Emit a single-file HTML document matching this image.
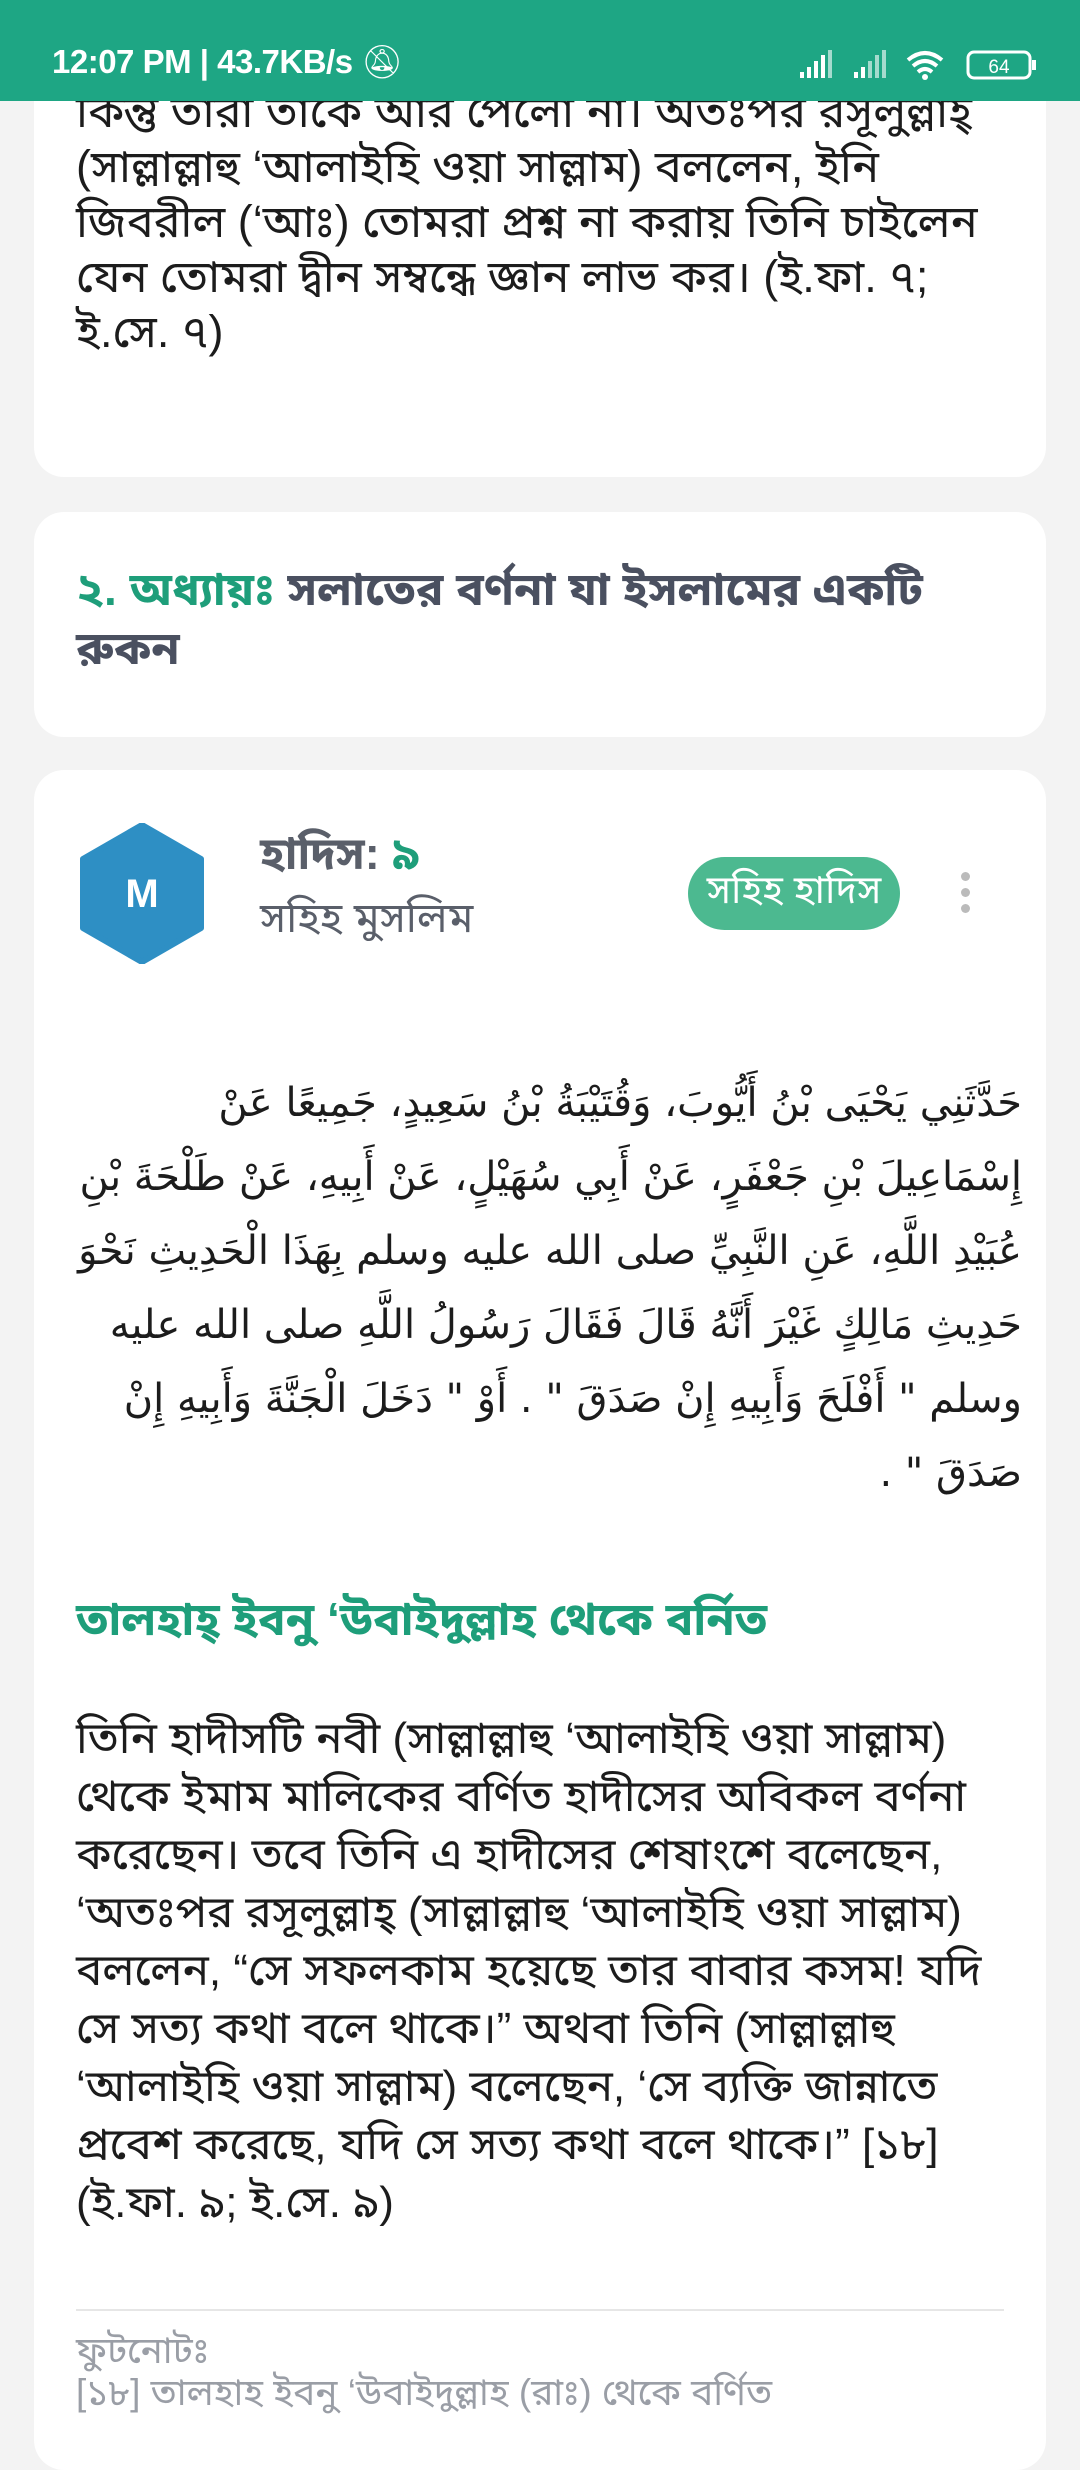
<!DOCTYPE html>
<html><head><meta charset="utf-8"><style>
*{margin:0;padding:0;box-sizing:border-box}
body{width:1080px;height:2400px;overflow:hidden;background:#f3f3f3;font-family:"Liberation Sans","Noto Sans Bengali","Lohit Bengali","Noto Sans CJK SC",sans-serif;position:relative}
.sb{position:absolute;top:0;left:0;width:1080px;height:101px;background:#1ea684;z-index:5;color:#fff}
.card{position:absolute;left:34px;width:1012px;background:#fff;border-radius:30px;overflow:hidden}
.txt{font-size:45px;line-height:55px;color:#1c1c1c;white-space:nowrap}
</style></head><body>
<div class="sb">
<div style="position:absolute;left:52px;top:43px;font-size:33px;font-weight:bold;letter-spacing:-0.5px">12:07 PM | 43.7KB/s <span style="font-weight:normal">🔕︎</span></div>
<svg style="position:absolute;left:798px;top:48px" width="240" height="34" viewBox="0 0 240 34">
<g fill="#fff"><rect x="2" y="24" width="4" height="6"/><rect x="9" y="19" width="4" height="11"/><rect x="16" y="13" width="4" height="17"/><rect x="23" y="7" width="4" height="23"/><rect x="30" y="2" width="4" height="28" opacity=".6"/>
<rect x="56" y="24" width="4" height="6"/><rect x="63" y="19" width="4" height="11"/><rect x="70" y="13" width="4" height="17" opacity=".6"/><rect x="77" y="7" width="4" height="23" opacity=".6"/><rect x="84" y="2" width="4" height="28" opacity=".6"/></g>
<path d="M110 12 Q127 -2 144 12 M115 18 Q127 8 139 18 M120 24 Q127 18 134 24" stroke="#fff" stroke-width="4" fill="none"/><circle cx="127" cy="29" r="3" fill="#fff"/>
<rect x="170" y="4" width="62" height="26" rx="6" stroke="#fff" stroke-width="3" fill="none"/><rect x="234" y="12" width="4" height="10" fill="#fff"/>
<text x="201" y="25" font-size="19" fill="#fff" text-anchor="middle" font-family="Liberation Sans">64</text></svg>
</div>
<div class="card txt" style="top:60px;height:417px;padding:24px 42px 0 42px">
কিন্তু তারা তাকে আর পেলো না। অতঃপর রসূলুল্লাহ্<br>(সাল্লাল্লাহু ‘আলাইহি ওয়া সাল্লাম) বললেন, ইনি<br>জিবরীল (‘আঃ) তোমরা প্রশ্ন না করায় তিনি চাইলেন<br>যেন তোমরা দ্বীন সম্বন্ধে জ্ঞান লাভ কর। (ই.ফা. ৭;<br>ই.সে. ৭)
</div>
<div class="card" style="top:512px;height:225px;padding:48px 42px 0 42px;font-size:46px;line-height:59px;font-weight:bold;color:#4a5060;white-space:nowrap">
<span style="color:#1e9e7a">২. অধ্যায়ঃ</span> সলাতের বর্ণনা যা ইসলামের একটি<br>রুকন
</div>
<div class="card" style="top:770px;height:1700px">
<svg style="position:absolute;left:45px;top:53px" width="126" height="141" viewBox="0 0 126 141"><path d="M63 2 L122 36 L122 105 L63 139 L4 105 L4 36 Z" fill="#2e8fc4" stroke="#2e8fc4" stroke-width="6" stroke-linejoin="round"/><text x="63" y="84" font-size="40" fill="#fff" text-anchor="middle" font-family="Liberation Sans" font-weight="bold">M</text></svg>
<div style="position:absolute;left:226px;top:58px;font-size:45px;font-weight:bold;color:#5a5f6a">হাদিস: <span style="color:#1e9e7a">৯</span></div>
<div style="position:absolute;left:226px;top:124px;font-size:42px;color:#5a5f6a">সহিহ মুসলিম</div>
<div style="position:absolute;left:654px;top:87px;width:212px;height:73px;border-radius:37px;background:#4cb990;color:#fff;font-size:39px;text-align:center;line-height:68px;white-space:nowrap">সহিহ হাদিস</div>
<div style="position:absolute;left:927px;top:102px;width:10px"><div style="width:9px;height:9px;border-radius:50%;background:#bbb;margin-bottom:7px"></div><div style="width:9px;height:9px;border-radius:50%;background:#bbb;margin-bottom:7px"></div><div style="width:9px;height:9px;border-radius:50%;background:#bbb"></div></div>
<div dir="rtl" style="position:absolute;left:42px;top:296px;width:946px;font-family:'DejaVu Sans',sans-serif;font-size:40px;line-height:74px;color:#1c1c1c;text-align:right">حَدَّثَنِي يَحْيَى بْنُ أَيُّوبَ، وَقُتَيْبَةُ بْنُ سَعِيدٍ، جَمِيعًا عَنْ إِسْمَاعِيلَ بْنِ جَعْفَرٍ، عَنْ أَبِي سُهَيْلٍ، عَنْ أَبِيهِ، عَنْ طَلْحَةَ بْنِ عُبَيْدِ اللَّهِ، عَنِ النَّبِيِّ صلى الله عليه وسلم بِهَذَا الْحَدِيثِ نَحْوَ حَدِيثِ مَالِكٍ غَيْرَ أَنَّهُ قَالَ فَقَالَ رَسُولُ اللَّهِ صلى الله عليه وسلم " أَفْلَحَ وَأَبِيهِ إِنْ صَدَقَ " . أَوْ " دَخَلَ الْجَنَّةَ وَأَبِيهِ إِنْ صَدَقَ " .</div>
<div style="position:absolute;left:42px;top:822px;font-size:46px;font-weight:bold;color:#1e9e7a;white-space:nowrap">তালহাহ্ ইবনু ‘উবাইদুল্লাহ থেকে বর্নিত</div>
<div class="txt" style="position:absolute;left:42px;top:940px;width:960px;line-height:58px;font-size:44px">তিনি হাদীসটি নবী (সাল্লাল্লাহু ‘আলাইহি ওয়া সাল্লাম)<br>থেকে ইমাম মালিকের বর্ণিত হাদীসের অবিকল বর্ণনা<br>করেছেন। তবে তিনি এ হাদীসের শেষাংশে বলেছেন,<br>‘অতঃপর রসূলুল্লাহ্ (সাল্লাল্লাহু ‘আলাইহি ওয়া সাল্লাম)<br>বললেন, “সে সফলকাম হয়েছে তার বাবার কসম! যদি<br>সে সত্য কথা বলে থাকে।” অথবা তিনি (সাল্লাল্লাহু<br>‘আলাইহি ওয়া সাল্লাম) বলেছেন, ‘সে ব্যক্তি জান্নাতে<br>প্রবেশ করেছে, যদি সে সত্য কথা বলে থাকে।” [১৮]<br>(ই.ফা. ৯; ই.সে. ৯)</div>
<div style="position:absolute;left:42px;top:1539px;width:928px;height:2px;background:#e6e6e6"></div>
<div style="position:absolute;left:42px;top:1560px;font-size:37px;line-height:42px;color:#9a9ea6;white-space:nowrap">ফুটনোটঃ<br>[১৮] তালহাহ ইবনু ‘উবাইদুল্লাহ (রাঃ) থেকে বর্ণিত</div>
</div>
</body></html>
